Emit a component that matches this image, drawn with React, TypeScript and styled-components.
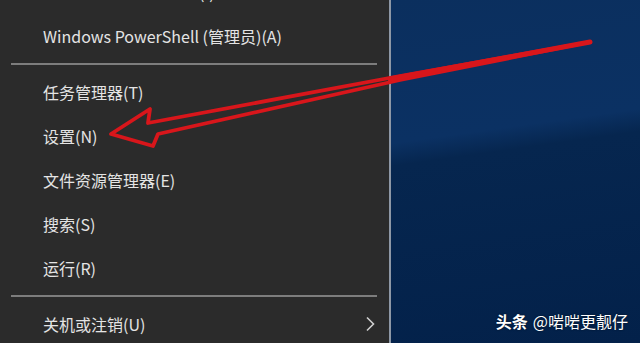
import React from "react"
import styled, { createGlobalStyle } from "styled-components"

const GlobalStyle = createGlobalStyle`
  html, body {
    margin: 0;
    padding: 0;
    background: #2b2b2b;
  }
  body {
    font-family: "Noto Sans CJK SC", "Noto Sans", sans-serif;
  }
`

const Screen = styled.div`
  position: relative;
  width: 640px;
  height: 343px;
  overflow: hidden;
  display: flex;
`

const Menu = styled.div`
  width: 389px;
  flex: none;
  background: #2b2b2b;
  border-right: 2px solid #8e98a6;
  display: flex;
  flex-direction: column;
  margin-top: -30px;
`

const Item = styled.div`
  height: 44px;
  flex: none;
  display: flex;
  align-items: center;
  justify-content: space-between;
  padding: 0 14px 0 43px;
  color: #e4e4e4;
  font-size: 16px;
`

const Separator = styled.div`
  height: 12px;
  flex: none;
  display: flex;
  align-items: center;
  padding: 0 12px 0 11px;
  &::after {
    content: "";
    flex: 1;
    height: 2px;
    background: #7d7d7d;
  }
`

const Desktop = styled.div`
  flex: 1;
  background: linear-gradient(172deg, #0b2f5e 0%, #0b3163 38%, #06264f 44%, #03214a 100%);
  display: flex;
  flex-direction: column;
  justify-content: flex-end;
  align-items: flex-end;
  padding: 0 12px 10px 0;
`

const Watermark = styled.div`
  color: #ffffff;
  font-size: 16px;
  text-shadow: 0 0 2px rgba(0, 0, 0, 0.6);
  b {
    font-weight: 700;
    margin-right: 5px;
  }
`

const Arrow = styled.svg`
  position: absolute;
  left: 0;
  top: 0;
  pointer-events: none;
`

const Chevron = () => (
  <svg width="10" height="16" viewBox="0 0 10 16">
    <polyline points="2,1.5 8.5,8 2,14.5" fill="none" stroke="#cfcfcf" strokeWidth="1.6" />
  </svg>
)

const items = [
  "任务管理器(T)",
  "设置(N)",
  "文件资源管理器(E)",
  "搜索(S)",
  "运行(R)",
]

export default function App() {
  return (
    <Screen>
      <GlobalStyle />
      <Menu>
        <Item>Windows PowerShell(I)</Item>
        <Item>Windows PowerShell (管理员)(A)</Item>
        <Separator />
        {items.map((label) => (
          <Item key={label}>{label}</Item>
        ))}
        <Separator />
        <Item>
          关机或注销(U)
          <Chevron />
        </Item>
      </Menu>
      <Desktop>
        <Watermark>
          <b>头条</b>@啱啱更靓仔
        </Watermark>
      </Desktop>
      <Arrow width="640" height="343" viewBox="0 0 640 343">
        <polygon
          points="111,134 150,109 148,123 400,76 590,42 400,80 158,134 153,146"
          fill="none"
          stroke="#d8161b"
          strokeWidth="3.8"
          strokeLinejoin="round"
        />
        <line x1="390" y1="79" x2="590" y2="42" stroke="#d8161b" strokeWidth="5" strokeLinecap="round" />
      </Arrow>
    </Screen>
  )
}
